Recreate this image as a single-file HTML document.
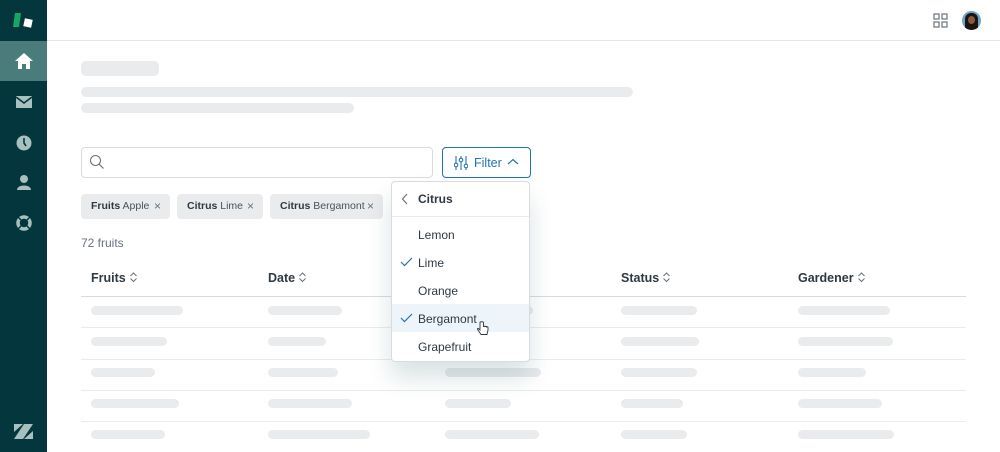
<!DOCTYPE html>
<html><head><style>
*{box-sizing:border-box;margin:0;padding:0}
body{width:1000px;height:452px;overflow:hidden;background:#fff;font-family:"Liberation Sans",sans-serif;position:relative;color:#2f3941}
.a{position:absolute}
.sb{left:0;top:0;width:47px;height:452px;background:#03363d}
.sk{position:absolute;background:#e9ebed;border-radius:6px}
.tag{position:absolute;top:194px;height:25px;background:#e9ebed;border-radius:4px;font-size:10.5px;line-height:25px;padding-left:10px;color:#49545c;white-space:nowrap}
.tag b{color:#2f3941}
.tag i{font-style:normal;position:absolute;right:9px;color:#68737d;font-size:12px}
.th{position:absolute;top:271px;font-size:12.5px;font-weight:bold;color:#2f3941}
.th svg{vertical-align:-1px;margin-left:3px}
.hl{position:absolute;left:81px;width:885px;height:1px;background:#e9ebed}
.it{position:absolute;left:26px;font-size:12px;color:#2f3941}
</style></head><body>
<div class="a sb"></div>
<svg class="a" style="left:12px;top:11px" width="24" height="18"><polygon points="3,2 9,2 7,16 1,16" fill="#17a764"/><rect x="12" y="8" width="8" height="8" fill="#fff" transform="rotate(12 16 12)"/></svg>
<div class="a" style="left:0;top:41px;width:47px;height:40px;background:#4a7c7b"></div>
<svg class="a" style="left:14px;top:52px" width="20" height="18"><path d="M10 1 L19 9 H16 V17 H12 V12 H8 V17 H4 V9 H1Z" fill="#fff"/></svg>
<svg class="a" style="left:15px;top:95px" width="18" height="14"><rect x="1" y="1" width="16" height="12" fill="#a8c0bf"/><path d="M1 2 L9 8 L17 2" stroke="#03363d" stroke-width="1.6" fill="none"/></svg>
<svg class="a" style="left:15px;top:134px" width="18" height="18"><circle cx="9" cy="9" r="7.5" fill="#a8c0bf"/><path d="M9 4 V9 L11 12" stroke="#03363d" stroke-width="1.6" fill="none"/></svg>
<svg class="a" style="left:16px;top:174px" width="16" height="16"><circle cx="8" cy="5" r="4" fill="#a8c0bf"/><path d="M1 16 C1 10 15 10 15 16Z" fill="#a8c0bf"/></svg>
<svg class="a" style="left:15px;top:214px" width="18" height="18"><circle cx="9" cy="9" r="6" stroke="#a8c0bf" stroke-width="3.5" fill="none"/><path d="M3 3L7 7M15 3L11 7M3 15L7 11M15 15L11 11" stroke="#03363d" stroke-width="1.5"/></svg>
<svg class="a" style="left:13px;top:423px" width="21" height="17"><polygon points="1,1 10,1 1,9" fill="#a8c0bf"/><polygon points="11,16 20,16 20,8" fill="#a8c0bf"/><polygon points="11,1 20,1 10,16 1,16" fill="#a8c0bf"/></svg>
<div class="a" style="left:47px;top:40px;width:953px;height:1px;background:#e3e5e7"></div>
<svg class="a" style="left:933px;top:13px" width="15" height="15"><g fill="none" stroke="#68737d" stroke-width="1.2"><rect x="1" y="1" width="5" height="5"/><rect x="9" y="1" width="5" height="5"/><rect x="1" y="9" width="5" height="5"/><rect x="9" y="9" width="5" height="5"/></g></svg>
<div class="a" style="left:962px;top:11px;width:19px;height:19px;border-radius:50%;background:#6aa5d0;overflow:hidden"><div class="a" style="left:3px;top:2px;width:13px;height:17px;border-radius:6px 6px 2px 2px;background:#1c1410"></div><div class="a" style="left:6px;top:5px;width:7px;height:8px;border-radius:50%;background:#8a5a3c"></div></div>
<div class="sk" style="left:81px;top:61px;width:78px;height:15px;border-radius:5px"></div>
<div class="sk" style="left:81px;top:87px;width:552px;height:10px"></div>
<div class="sk" style="left:81px;top:103px;width:273px;height:10px"></div>
<div class="a" style="left:81px;top:147px;width:352px;height:31px;border:1px solid #d8dcde;border-radius:4px"></div>
<svg class="a" style="left:89px;top:154px" width="16" height="16"><circle cx="6.5" cy="6.5" r="5" stroke="#68737d" stroke-width="1.1" fill="none"/><path d="M10 10 L14.5 14.5" stroke="#68737d" stroke-width="1.2"/></svg>
<div class="a" style="left:442px;top:147px;width:89px;height:31px;border:1px solid #1f73b7;border-radius:4px"></div>
<svg class="a" style="left:454px;top:155px" width="14" height="16"><g stroke="#1f73b7" stroke-width="1.1" fill="none"><path d="M2 1V15M7 1V15M12 1V15"/><circle cx="2" cy="10" r="1.8" fill="#fff"/><circle cx="7" cy="5" r="1.8" fill="#fff"/><circle cx="12" cy="11" r="1.8" fill="#fff"/></g></svg>
<div class="a" style="left:474px;top:156px;font-size:12.5px;color:#1f73b7">Filter</div>
<svg class="a" style="left:507px;top:158px" width="12" height="8"><path d="M1 6 L6 1.5 L11 6" stroke="#1f73b7" stroke-width="1.2" fill="none"/></svg>
<div class="tag" style="left:81px;width:89px"><b>Fruits</b> Apple<i>×</i></div>
<div class="tag" style="left:177px;width:86px"><b>Citrus</b> Lime<i>×</i></div>
<div class="tag" style="left:270px;width:113px"><b>Citrus</b> Bergamont<i>×</i></div>
<div class="a" style="left:81px;top:236px;font-size:12px;color:#68737d">72 fruits</div>
<div class="th" style="left:91px">Fruits<svg width="9" height="12"><path d="M1.5 5 L4.5 2 L7.5 5 M1.5 7.5 L4.5 10.5 L7.5 7.5" stroke="#68737d" fill="none" stroke-width="1"/></svg></div>
<div class="th" style="left:268px">Date<svg width="9" height="12"><path d="M1.5 5 L4.5 2 L7.5 5 M1.5 7.5 L4.5 10.5 L7.5 7.5" stroke="#68737d" fill="none" stroke-width="1"/></svg></div>
<div class="th" style="left:621px">Status<svg width="9" height="12"><path d="M1.5 5 L4.5 2 L7.5 5 M1.5 7.5 L4.5 10.5 L7.5 7.5" stroke="#68737d" fill="none" stroke-width="1"/></svg></div>
<div class="th" style="left:798px">Gardener<svg width="9" height="12"><path d="M1.5 5 L4.5 2 L7.5 5 M1.5 7.5 L4.5 10.5 L7.5 7.5" stroke="#68737d" fill="none" stroke-width="1"/></svg></div>
<div class="hl" style="top:296px;background:#d8dcde"></div>
<div class="hl" style="top:327px"></div><div class="hl" style="top:359px"></div><div class="hl" style="top:390px"></div><div class="hl" style="top:421px"></div>
<div class="sk" style="left:91px;top:306px;width:92px;height:9px"></div><div class="sk" style="left:268px;top:306px;width:74px;height:9px"></div><div class="sk" style="left:445px;top:306px;width:88px;height:9px"></div><div class="sk" style="left:621px;top:306px;width:76px;height:9px"></div><div class="sk" style="left:798px;top:306px;width:92px;height:9px"></div>
<div class="sk" style="left:91px;top:337px;width:76px;height:9px"></div><div class="sk" style="left:268px;top:337px;width:58px;height:9px"></div><div class="sk" style="left:621px;top:337px;width:78px;height:9px"></div><div class="sk" style="left:798px;top:337px;width:95px;height:9px"></div>
<div class="sk" style="left:91px;top:368px;width:64px;height:9px"></div><div class="sk" style="left:268px;top:368px;width:70px;height:9px"></div><div class="sk" style="left:445px;top:368px;width:96px;height:9px"></div><div class="sk" style="left:621px;top:368px;width:76px;height:9px"></div><div class="sk" style="left:798px;top:368px;width:68px;height:9px"></div>
<div class="sk" style="left:91px;top:399px;width:88px;height:9px"></div><div class="sk" style="left:268px;top:399px;width:84px;height:9px"></div><div class="sk" style="left:445px;top:399px;width:66px;height:9px"></div><div class="sk" style="left:621px;top:399px;width:62px;height:9px"></div><div class="sk" style="left:798px;top:399px;width:84px;height:9px"></div>
<div class="sk" style="left:91px;top:430px;width:74px;height:9px"></div><div class="sk" style="left:268px;top:430px;width:102px;height:9px"></div><div class="sk" style="left:445px;top:430px;width:94px;height:9px"></div><div class="sk" style="left:621px;top:430px;width:66px;height:9px"></div><div class="sk" style="left:798px;top:430px;width:96px;height:9px"></div>
<div class="a" style="left:391px;top:181px;width:139px;height:181px;background:#fff;border:1px solid #d8dcde;border-radius:4px;box-shadow:0 16px 24px rgba(4,68,77,.15)">
<svg class="a" style="left:9px;top:11px" width="8" height="12"><path d="M6 1 L1.5 6 L6 11" stroke="#68737d" stroke-width="1.2" fill="none"/></svg>
<div class="it" style="top:10px;font-weight:bold">Citrus</div>
<div class="a" style="left:0;top:34px;width:137px;height:1px;background:#e9ebed"></div>
<div class="it" style="top:46px">Lemon</div>
<svg class="a" style="left:8px;top:75px" width="13" height="10"><path d="M1 5 L4.5 8.5 L12 1" stroke="#1f73b7" stroke-width="1.2" fill="none"/></svg>
<div class="it" style="top:74px">Lime</div>
<div class="it" style="top:102px">Orange</div>
<div class="a" style="left:0;top:122px;width:137px;height:28px;background:#edf4fa"></div>
<svg class="a" style="left:8px;top:131px" width="13" height="10"><path d="M1 5 L4.5 8.5 L12 1" stroke="#1f73b7" stroke-width="1.2" fill="none"/></svg>
<div class="it" style="top:130px">Bergamont</div>
<div class="it" style="top:158px">Grapefruit</div>
<svg class="a" style="left:85px;top:139px" width="12" height="15"><path d="M3 1.5 V9 L1.5 7.5 C0.5 7 0 8 1 9 L4 13.5 H10 L11 9 V6.5 C11 5.5 9.5 5.5 9.5 6.5 V6 C9.5 5 8 5 8 6 C8 5 6.5 5 6.5 6 V1.5 C6.5 0.5 3 0.5 3 1.5Z" fill="#fff" stroke="#2f3941" stroke-width="0.9"/></svg>
</div>
</body></html>
